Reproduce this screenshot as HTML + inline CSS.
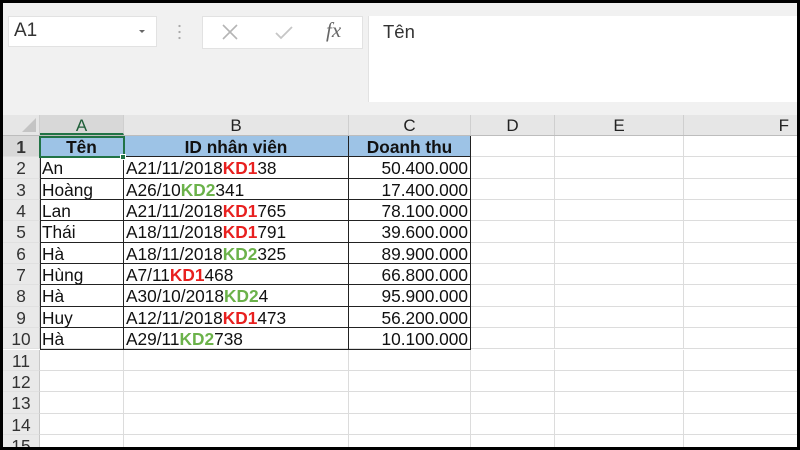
<!DOCTYPE html>
<html><head><meta charset="utf-8"><style>
*{margin:0;padding:0;box-sizing:border-box}
body{width:800px;height:450px;background:#000;overflow:hidden;font-family:"Liberation Sans",Arial,sans-serif;position:relative}
#app{position:absolute;left:3px;top:3px;width:794px;height:444px;background:#f1f1f1;overflow:hidden}
.abs{position:absolute}
.row{position:absolute;left:0;height:21.35px;display:flex;width:794px}
.c{height:100%;border-right:1px solid #dcdcdc;border-bottom:1px solid #dcdcdc;background:#fff;font-size:17.3px;line-height:22px;color:#111;white-space:nowrap;overflow:hidden;padding:0 2px}
.h{width:37px;background:#e9e9e9;color:#333;text-align:center;border-right:1px solid #c8c8c8;border-bottom:1px solid #e0e0e0;padding:0}
.a{width:84px}.b{width:225px}.cc{width:122px;text-align:right;padding-right:2px}.d{width:84px}.e{width:129px}.f{width:113px;border-right:none}
.r{color:#e8201f;font-weight:bold}.g{color:#6bb24a;font-weight:bold}
.hd .c{background:#9dc3e6;font-weight:bold;text-align:center}
.hdr{position:absolute;top:112px;left:0;height:21px;display:flex;width:794px;background:#e6e6e6;border-bottom:1px solid #bdbdbd}
.hdr div{height:100%;text-align:center;font-size:17px;line-height:22px;color:#222;border-right:1px solid #cfcfcf}
</style></head><body><div id="app">
<div class="abs" style="left:5px;top:13px;width:149px;height:31px;background:#fff;border:1px solid #e2e2e2"></div>
<div class="abs" style="left:11px;top:17px;font-size:19px;color:#333">A1</div>
<div class="abs" style="left:136px;top:27px;width:0;height:0;border-left:3px solid transparent;border-right:3px solid transparent;border-top:3px solid #666"></div>
<div class="abs" style="left:175px;top:20px;width:3px;height:18px;background:radial-gradient(circle,#aaa 1px,transparent 1.3px) 0 0/3px 6px"></div>
<div class="abs" style="left:199px;top:13px;width:161px;height:33px;background:#fff;border:1px solid #e2e2e2"></div>
<svg class="abs" style="left:217px;top:19px" width="20" height="20"><path d="M3 3L17 17M17 3L3 17" stroke="#b5b5b5" stroke-width="1.6"/></svg>
<svg class="abs" style="left:270px;top:19px" width="22" height="20"><path d="M3 11L8 16L19 5" stroke="#c6c6c6" stroke-width="1.8" fill="none"/></svg>
<div class="abs" style="left:323px;top:15px;font-family:'Liberation Serif',serif;font-style:italic;font-size:21px;color:#666">fx</div>
<div class="abs" style="left:365px;top:13px;width:432px;height:86px;background:#fff;border-left:1px solid #e2e2e2"></div>
<div class="abs" style="left:380px;top:18px;font-size:18.5px;color:#333">Tên</div>
<div class="hdr">
<div style="width:37px;position:relative"><span style="position:absolute;right:3px;bottom:3px;width:0;height:0;border-left:14px solid transparent;border-bottom:14px solid #c4c4c4"></span></div>
<div style="width:84px;background:#d8d8d8;color:#1e5e38;border-bottom:2px solid #217346">A</div>
<div style="width:225px">B</div><div style="width:122px">C</div><div style="width:84px">D</div><div style="width:129px">E</div><div style="width:113px;text-align:right;padding-right:8px;border:none">F</div>
</div>
<div class="abs" style="left:0;top:133px;width:794px;height:320px;background:#fff">
<div class="row hd" style="top:0"><div class="c h" style="background:#d8d8d8;color:#333">1</div><div class="c a">Tên</div><div class="c b">ID nhân viên</div><div class="c cc" style="text-align:center">Doanh thu</div><div class="c d" style="background:#fff"></div><div class="c e" style="background:#fff"></div><div class="c f" style="background:#fff"></div></div>
<div class="row" style="top:21.35px"><div class="c h">2</div><div class="c a">An</div><div class="c b">A21/11/2018<span class="r">KD1</span>38</div><div class="c cc">50.400.000</div><div class="c d"></div><div class="c e"></div><div class="c f"></div></div>
<div class="row" style="top:42.7px"><div class="c h">3</div><div class="c a">Hoàng</div><div class="c b">A26/10<span class="g">KD2</span>341</div><div class="c cc">17.400.000</div><div class="c d"></div><div class="c e"></div><div class="c f"></div></div>
<div class="row" style="top:64.05px"><div class="c h">4</div><div class="c a">Lan</div><div class="c b">A21/11/2018<span class="r">KD1</span>765</div><div class="c cc">78.100.000</div><div class="c d"></div><div class="c e"></div><div class="c f"></div></div>
<div class="row" style="top:85.4px"><div class="c h">5</div><div class="c a">Thái</div><div class="c b">A18/11/2018<span class="r">KD1</span>791</div><div class="c cc">39.600.000</div><div class="c d"></div><div class="c e"></div><div class="c f"></div></div>
<div class="row" style="top:106.75px"><div class="c h">6</div><div class="c a">Hà</div><div class="c b">A18/11/2018<span class="g">KD2</span>325</div><div class="c cc">89.900.000</div><div class="c d"></div><div class="c e"></div><div class="c f"></div></div>
<div class="row" style="top:128.1px"><div class="c h">7</div><div class="c a">Hùng</div><div class="c b">A7/11<span class="r">KD1</span>468</div><div class="c cc">66.800.000</div><div class="c d"></div><div class="c e"></div><div class="c f"></div></div>
<div class="row" style="top:149.45px"><div class="c h">8</div><div class="c a">Hà</div><div class="c b">A30/10/2018<span class="g">KD2</span>4</div><div class="c cc">95.900.000</div><div class="c d"></div><div class="c e"></div><div class="c f"></div></div>
<div class="row" style="top:170.8px"><div class="c h">9</div><div class="c a">Huy</div><div class="c b">A12/11/2018<span class="r">KD1</span>473</div><div class="c cc">56.200.000</div><div class="c d"></div><div class="c e"></div><div class="c f"></div></div>
<div class="row" style="top:192.15px"><div class="c h">10</div><div class="c a">Hà</div><div class="c b">A29/11<span class="g">KD2</span>738</div><div class="c cc">10.100.000</div><div class="c d"></div><div class="c e"></div><div class="c f"></div></div>
<div class="row" style="top:213.5px"><div class="c h">11</div><div class="c a"></div><div class="c b"></div><div class="c cc"></div><div class="c d"></div><div class="c e"></div><div class="c f"></div></div>
<div class="row" style="top:234.85px"><div class="c h">12</div><div class="c a"></div><div class="c b"></div><div class="c cc"></div><div class="c d"></div><div class="c e"></div><div class="c f"></div></div>
<div class="row" style="top:256.2px"><div class="c h">13</div><div class="c a"></div><div class="c b"></div><div class="c cc"></div><div class="c d"></div><div class="c e"></div><div class="c f"></div></div>
<div class="row" style="top:277.55px"><div class="c h">14</div><div class="c a"></div><div class="c b"></div><div class="c cc"></div><div class="c d"></div><div class="c e"></div><div class="c f"></div></div>
<div class="row" style="top:298.9px"><div class="c h">15</div><div class="c a"></div><div class="c b"></div><div class="c cc"></div><div class="c d"></div><div class="c e"></div><div class="c f"></div></div>
<div class="abs" style="left:37px;top:0;width:1px;height:214px;background:#222"></div>
<div class="abs" style="left:120px;top:0;width:1px;height:214px;background:#222"></div>
<div class="abs" style="left:345px;top:0;width:1px;height:214px;background:#222"></div>
<div class="abs" style="left:467px;top:0;width:1px;height:214px;background:#222"></div>
<div class="abs" style="left:37px;top:20.35px;width:431px;height:1px;background:#222"></div>
<div class="abs" style="left:37px;top:41.7px;width:431px;height:1px;background:#222"></div>
<div class="abs" style="left:37px;top:63.05px;width:431px;height:1px;background:#222"></div>
<div class="abs" style="left:37px;top:84.4px;width:431px;height:1px;background:#222"></div>
<div class="abs" style="left:37px;top:105.75px;width:431px;height:1px;background:#222"></div>
<div class="abs" style="left:37px;top:127.1px;width:431px;height:1px;background:#222"></div>
<div class="abs" style="left:37px;top:148.45px;width:431px;height:1px;background:#222"></div>
<div class="abs" style="left:37px;top:169.8px;width:431px;height:1px;background:#222"></div>
<div class="abs" style="left:37px;top:191.15px;width:431px;height:1px;background:#222"></div>
<div class="abs" style="left:37px;top:212.5px;width:431px;height:1px;background:#222"></div>
<div class="abs" style="left:36px;top:0;width:86px;height:22px;border:2px solid #217346"></div>
<div class="abs" style="left:117px;top:18px;width:6px;height:6px;background:#217346;border:1px solid #fff"></div>
</div>
</div></body></html>
